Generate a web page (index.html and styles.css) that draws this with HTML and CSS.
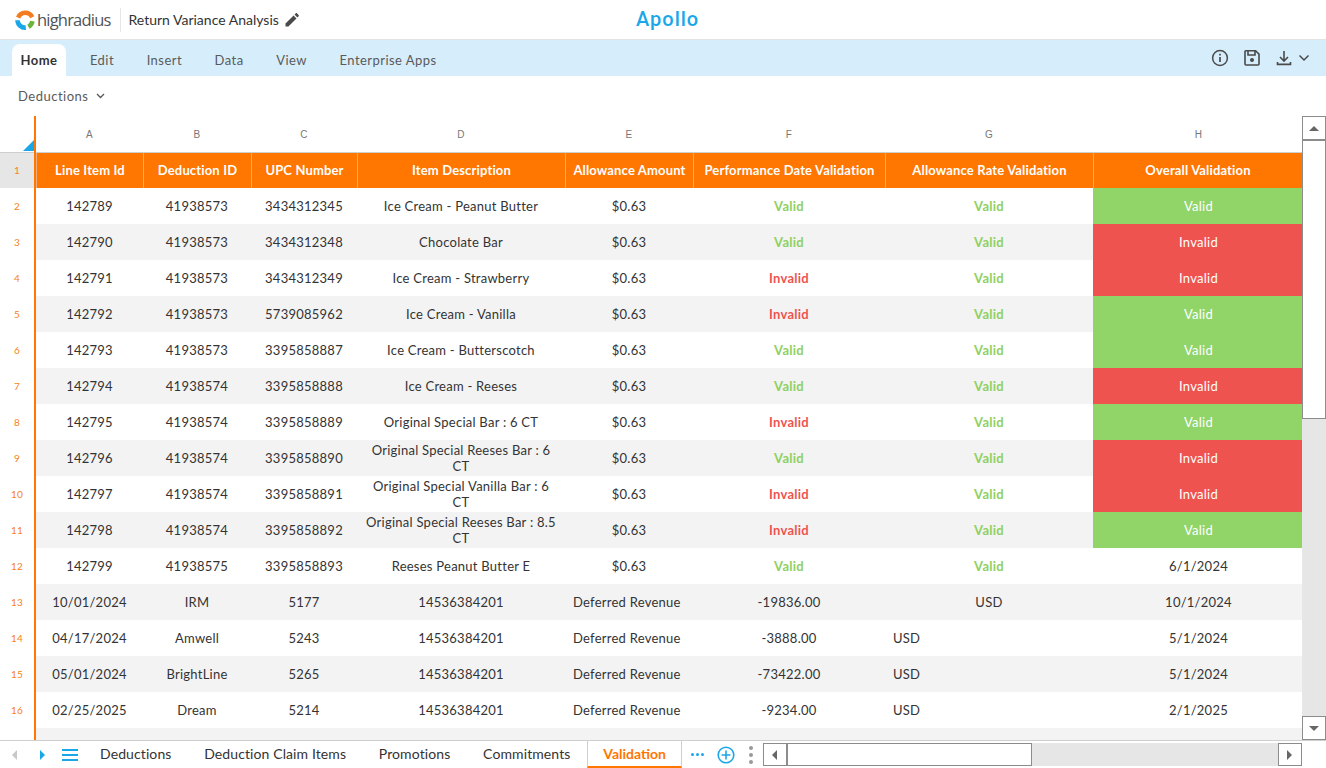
FILE: index.html
```html
<!DOCTYPE html>
<html lang="en">
<head>
<meta charset="utf-8">
<title>Return Variance Analysis</title>
<link rel="stylesheet" href="styles.css">
</head>
<body>
<div class="app">
  <header class="topbar">
    <div class="brand">
      <svg class="logo-mark" width="22" height="22" viewBox="0 0 22 22" fill="none" stroke-width="4.6">
        <path d="M4.2 8.6A7.6 7.6 0 0 1 18.2 8.2" stroke="#f47b20"/>
        <path d="M18.4 12.2A7.6 7.6 0 0 1 14.4 17.8" stroke="#6cb33f"/>
        <path d="M11.8 18.6A7.6 7.6 0 0 1 3.5 11.2" stroke="#1aa7e8"/>
      </svg>
      <span class="logo-text">highradius</span>
    </div>
    <div class="title-wrap">
      <span class="doc-title">Return Variance Analysis</span>
      <svg class="pencil" width="14" height="14" viewBox="0 0 14 14"><path d="M0.5 13.5V10.6L8.6 2.5L11.5 5.4L3.4 13.5ZM9.5 1.6L10.7 0.4C11.1 0 11.7 0 12.1 0.4L13.6 1.9C14 2.3 14 2.9 13.6 3.3L12.4 4.5Z" fill="#4a4a4a"/></svg>
    </div>
    <div class="apollo">Apollo</div>
  </header>

  <nav class="ribbon">
    <div class="tabs">
      <span class="rtab active">Home</span>
      <span class="rtab">Edit</span>
      <span class="rtab">Insert</span>
      <span class="rtab">Data</span>
      <span class="rtab">View</span>
      <span class="rtab">Enterprise Apps</span>
    </div>
    <div class="tools">
      <svg width="18" height="18" viewBox="0 0 18 18" fill="none" stroke="#4a4a4a" stroke-width="1.5"><circle cx="9" cy="9" r="7.4"/><path d="M9 8V13M9 4.8V6.4" stroke-width="1.7"/></svg>
      <svg class="tool-save" width="18" height="18" viewBox="0 0 18 18" fill="none" stroke="#4a4a4a" stroke-width="1.6"><path d="M2.8 1.8H12.6L16 5.2V15C16 15.6 15.6 16 15 16H3C2.4 16 2 15.6 2 15V2.6C2 2.2 2.4 1.8 2.8 1.8Z"/><path d="M5 2V6H12V2"/><circle cx="9" cy="11" r="2" fill="#4a4a4a" stroke="none"/></svg>
      <svg class="tool-dl" width="16" height="16" viewBox="0 0 16 16" fill="none" stroke="#4a4a4a" stroke-width="1.6"><path d="M8 1V10.5M4 7L8 11L12 7"/><path d="M1.5 12V14.4H14.5V12"/></svg>
      <svg class="tool-chev" width="12" height="8" viewBox="0 0 12 8" fill="none" stroke="#4a4a4a" stroke-width="1.5"><path d="M1.5 1.5L6 6L10.5 1.5"/></svg>
    </div>
  </nav>

  <div class="subbar">
    <span>Deductions</span>
    <svg width="9" height="6" viewBox="0 0 9 6" fill="none" stroke="#555" stroke-width="1.3"><path d="M1 1L4.5 4.5L8 1"/></svg>
  </div>

  <main class="sheet">
    <div class="grid-area">
      <div class="orange-line"></div>
      <div class="row colheads">
        <div class="rh corner"><i class="tri"></i></div>
        <div>A</div><div>B</div><div>C</div><div>D</div><div>E</div><div>F</div><div>G</div><div>H</div>
      </div>
      <div class="row head">
        <div class="rh sel">1</div>
        <div>Line Item Id</div><div>Deduction ID</div><div>UPC Number</div><div>Item Description</div><div>Allowance Amount</div><div>Performance Date Validation</div><div>Allowance Rate Validation</div><div>Overall Validation</div>
      </div>
      <div class="row"><div class="rh">2</div><div>142789</div><div>41938573</div><div>3434312345</div><div>Ice Cream - Peanut Butter</div><div>$0.63</div><div class="ok">Valid</div><div class="ok">Valid</div><div class="fill-ok">Valid</div></div>
      <div class="row"><div class="rh">3</div><div>142790</div><div>41938573</div><div>3434312348</div><div>Chocolate Bar</div><div>$0.63</div><div class="ok">Valid</div><div class="ok">Valid</div><div class="fill-bad">Invalid</div></div>
      <div class="row"><div class="rh">4</div><div>142791</div><div>41938573</div><div>3434312349</div><div>Ice Cream - Strawberry</div><div>$0.63</div><div class="bad">Invalid</div><div class="ok">Valid</div><div class="fill-bad">Invalid</div></div>
      <div class="row"><div class="rh">5</div><div>142792</div><div>41938573</div><div>5739085962</div><div>Ice Cream - Vanilla</div><div>$0.63</div><div class="bad">Invalid</div><div class="ok">Valid</div><div class="fill-ok">Valid</div></div>
      <div class="row"><div class="rh">6</div><div>142793</div><div>41938573</div><div>3395858887</div><div>Ice Cream - Butterscotch</div><div>$0.63</div><div class="ok">Valid</div><div class="ok">Valid</div><div class="fill-ok">Valid</div></div>
      <div class="row"><div class="rh">7</div><div>142794</div><div>41938574</div><div>3395858888</div><div>Ice Cream - Reeses</div><div>$0.63</div><div class="ok">Valid</div><div class="ok">Valid</div><div class="fill-bad">Invalid</div></div>
      <div class="row"><div class="rh">8</div><div>142795</div><div>41938574</div><div>3395858889</div><div>Original Special Bar : 6 CT</div><div>$0.63</div><div class="bad">Invalid</div><div class="ok">Valid</div><div class="fill-ok">Valid</div></div>
      <div class="row"><div class="rh">9</div><div>142796</div><div>41938574</div><div>3395858890</div><div>Original Special Reeses Bar : 6 CT</div><div>$0.63</div><div class="ok">Valid</div><div class="ok">Valid</div><div class="fill-bad">Invalid</div></div>
      <div class="row"><div class="rh">10</div><div>142797</div><div>41938574</div><div>3395858891</div><div>Original Special Vanilla Bar : 6 CT</div><div>$0.63</div><div class="bad">Invalid</div><div class="ok">Valid</div><div class="fill-bad">Invalid</div></div>
      <div class="row"><div class="rh">11</div><div>142798</div><div>41938574</div><div>3395858892</div><div>Original Special Reeses Bar : 8.5 CT</div><div>$0.63</div><div class="bad">Invalid</div><div class="ok">Valid</div><div class="fill-ok">Valid</div></div>
      <div class="row"><div class="rh">12</div><div>142799</div><div>41938575</div><div>3395858893</div><div>Reeses Peanut Butter E</div><div>$0.63</div><div class="ok">Valid</div><div class="ok">Valid</div><div>6/1/2024</div></div>
      <div class="row"><div class="rh">13</div><div>10/01/2024</div><div>IRM</div><div>5177</div><div>14536384201</div><div class="left">Deferred Revenue</div><div>-19836.00</div><div>USD</div><div>10/1/2024</div></div>
      <div class="row"><div class="rh">14</div><div>04/17/2024</div><div>Amwell</div><div>5243</div><div>14536384201</div><div class="left">Deferred Revenue</div><div>-3888.00</div><div class="left">USD</div><div>5/1/2024</div></div>
      <div class="row"><div class="rh">15</div><div>05/01/2024</div><div>BrightLine</div><div>5265</div><div>14536384201</div><div class="left">Deferred Revenue</div><div>-73422.00</div><div class="left">USD</div><div>5/1/2024</div></div>
      <div class="row"><div class="rh">16</div><div>02/25/2025</div><div>Dream</div><div>5214</div><div>14536384201</div><div class="left">Deferred Revenue</div><div>-9234.00</div><div class="left">USD</div><div>2/1/2025</div></div>
      <div class="row"><div class="rh"></div><div></div><div></div><div></div><div></div><div></div><div></div><div></div><div></div></div>
    </div>
    <aside class="vscroll">
      <div class="sb-btn v"><i class="arrow up"></i></div>
      <div class="sb-thumb v"></div>
      <div class="sb-track"></div>
      <div class="sb-btn v"><i class="arrow down"></i></div>
    </aside>
  </main>

  <footer class="bottombar">
    <div class="nav-arrows">
      <i class="arrow left muted"></i>
      <i class="arrow right blue"></i>
      <span class="burger"><b></b><b></b><b></b></span>
    </div>
    <div class="sheet-tabs">
      <span class="stab">Deductions</span>
      <span class="stab">Deduction Claim Items</span>
      <span class="stab">Promotions</span>
      <span class="stab">Commitments</span>
      <span class="stab current">Validation</span>
    </div>
    <div class="sheet-actions">
      <span class="dots"><b></b><b></b><b></b></span>
      <svg width="18" height="18" viewBox="0 0 18 18" fill="none" stroke="#1aa7e8" stroke-width="1.6"><circle cx="9" cy="9" r="7.8"/><path d="M9 4.6V13.4M4.6 9H13.4"/></svg>
      <span class="kebab"><b></b><b></b><b></b></span>
    </div>
    <div class="hscroll">
      <div class="sb-btn h"><i class="arrow left"></i></div>
      <div class="sb-thumb h"></div>
      <div class="sb-track"></div>
      <div class="sb-btn h"><i class="arrow right"></i></div>
    </div>
  </footer>
</div>
</body>
</html>
```
FILE: styles.css
```css
* { box-sizing: border-box; }
html, body { margin: 0; height: 100%; overflow: hidden; }
body { font-family: Lato, "Liberation Sans", sans-serif; color: #333; background: #fff; }
.app { display: flex; flex-direction: column; width: 1326px; height: 768px; }

.topbar { position: relative; display: flex; align-items: center; height: 40px; flex: none; border-bottom: 1px solid #e3e3e3; padding-left: 14px; }
.brand { display: flex; align-items: center; gap: 1px; padding-right: 9px; height: 24px; border-right: 1px solid #e6e6e6; }
.logo-mark { display: block; }
.logo-text { font-family: "Open Sans", sans-serif; font-size: 16.5px; color: #4f5458; letter-spacing: -0.8px; }
.title-wrap { display: flex; align-items: center; gap: 6px; padding-left: 8px; }
.doc-title { font-size: 14px; color: #333; }
.apollo { position: absolute; left: 636px; top: 7px; font-family: Roboto, sans-serif; font-size: 20px; font-weight: 500; letter-spacing: 1px; color: #1aa7e8; }

.ribbon { display: flex; justify-content: space-between; align-items: flex-end; height: 36px; flex: none; background: #d6eefb; padding: 0 16px 0 12px; }
.tabs { display: flex; }
.rtab { display: block; height: 32px; line-height: 32px; padding: 0 8px; margin-right: 16.6px; font-size: 13px; color: #5a5a5a; letter-spacing: 0.45px; }
.rtab.active { background: #fff; border-radius: 8px 8px 0 0; color: #333; font-weight: 700; padding: 0 8.5px; margin-right: 16px; }
.tools { display: flex; align-items: center; height: 36px; }
.tool-save { margin-left: 14px; }
.tool-dl { margin-left: 15px; }
.tool-chev { margin-left: 6px; }

.subbar { display: flex; align-items: center; gap: 8px; height: 40px; flex: none; padding: 0 0 0 18px; font-size: 13px; color: #5a5a5a; letter-spacing: 0.5px; }

.sheet { display: flex; flex: 1; min-height: 0; }
.grid-area { position: relative; width: 1302px; overflow: hidden; }
.orange-line { position: absolute; left: 34px; top: 0; bottom: 0; width: 2px; background: #ff7600; z-index: 2; }
.row { display: grid; grid-template-columns: 36px 107px 108px 106px 208px 128px 192px 208px 209px; height: 36px; font-size: 13px; color: #333; letter-spacing: 0.25px; }
.row > div { display: flex; align-items: center; justify-content: center; text-align: center; padding: 0 8px; line-height: 16px; }
.row > div:last-child { padding-left: 10px; }
.row:nth-child(odd) { background: #f3f3f3; }
.row:nth-child(even) { background: #fff; }
.row > .rh { padding: 0 2px 0 0; font-size: 10px; color: #f58220; justify-content: center; background: #fff; }
.row:nth-child(odd) > .rh { background: #fff; }
.row.colheads { background: #fff; color: #777; font-family: "Liberation Sans", sans-serif; font-size: 10px; }
.row.colheads > div { padding-top: 2px; }
.rh.corner { position: relative; }
.tri { position: absolute; right: 2px; bottom: 1px; width: 0; height: 0; border-style: solid; border-width: 0 0 11px 11px; border-color: transparent transparent #1aa7e8 transparent; }
.row.head { background: #ff7600; color: #fff; font-weight: 700; border-top: 1px solid #cfcfcf; }
.row.head > div { border-left: 1px solid #eeae7c; letter-spacing: 0.15px; padding: 0 4px 2px; white-space: nowrap; }
.row.head > .rh { background: #e6e6e6; color: #f58220; font-weight: 400; border-left: 0; border-right: 2px solid #1aa7e8; box-shadow: none; }
.row > .left { justify-content: flex-start; }
.ok { color: #8fd05f; font-weight: 700; }
.bad { color: #ef5350; font-weight: 700; }
.row > .fill-ok { background: #91d468; color: #fff; }
.row > .fill-bad { background: #ef5350; color: #fff; }

.vscroll { display: flex; flex-direction: column; width: 24px; flex: none; background: #e6e6e6; }
.hscroll { display: flex; align-items: stretch; width: 539px; height: 23px; background: #e6e6e6; margin-left: 1px; }
.sb-btn { display: flex; align-items: center; justify-content: center; background: #fff; border: 1px solid #8c8c8c; flex: none; }
.sb-btn.v { width: 24px; height: 24px; }
.sb-btn.h { width: 24px; height: 23px; }
.sb-thumb { background: #fff; border: 1px solid #8c8c8c; flex: none; }
.sb-thumb.v { width: 24px; height: 279px; }
.sb-thumb.h { width: 245px; }
.sb-track { flex: 1; }
.arrow { display: block; width: 0; height: 0; border-style: solid; border-color: transparent; }
.arrow.up { border-width: 0 5px 5px; border-bottom-color: #666; }
.arrow.down { border-width: 5px 5px 0; border-top-color: #666; }
.arrow.left { border-width: 5px 5px 5px 0; border-right-color: #666; }
.arrow.right { border-width: 5px 0 5px 5px; border-left-color: #666; }
.arrow.left.muted { border-right-color: #c8c8c8; }
.arrow.right.blue { border-left-color: #1aa7e8; }

.bottombar { display: flex; align-items: center; height: 28px; flex: none; border-top: 1px solid #cfcfcf; font-size: 14px; }
.nav-arrows { display: flex; align-items: center; width: 84px; padding-left: 12px; flex: none; }
.nav-arrows .arrow.right { margin-left: 23px; }
.burger { display: flex; flex-direction: column; gap: 3px; width: 16px; margin-left: 17px; }
.burger b { display: block; height: 2px; background: #1aa7e8; }
.sheet-tabs { display: flex; height: 27px; }
.stab { display: flex; align-items: center; padding: 0 16.75px 2px 16px; color: #333; letter-spacing: 0.1px; }
.stab.current { color: #ff7600; font-weight: 700; padding: 0 15px; border-left: 1px solid #cfcfcf; border-right: 1px solid #cfcfcf; border-bottom: 2px solid #ff7600; letter-spacing: 0; }
.sheet-actions { display: flex; align-items: center; width: 80px; padding-left: 9px; flex: none; }
.dots { display: flex; gap: 2px; }
.dots b { display: block; width: 3px; height: 3px; border-radius: 50%; background: #1aa7e8; }
.sheet-actions svg { margin-left: 13px; }
.kebab { display: flex; flex-direction: column; gap: 3px; margin-left: 14px; }
.kebab b { display: block; width: 4px; height: 4px; border-radius: 50%; background: #999; }
```
